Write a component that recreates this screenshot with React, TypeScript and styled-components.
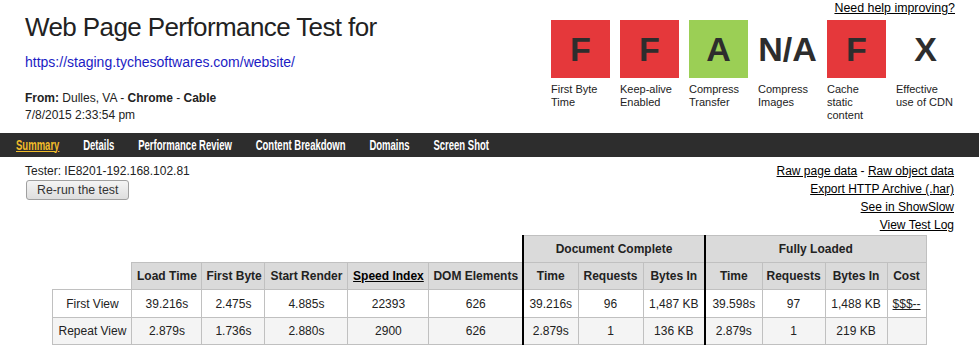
import React from 'react'
import styled, { createGlobalStyle } from 'styled-components'

type Tone = 'bad' | 'good' | 'none'

interface Grade {
    grade: string
    label: string[]
    tone: Tone
}

interface ResultRow {
    label: string
    cells: string[]
    cost?: string
}

const grades: Grade[] = [
    { grade: 'F', label: ['First Byte', 'Time'], tone: 'bad' },
    { grade: 'F', label: ['Keep-alive', 'Enabled'], tone: 'bad' },
    { grade: 'A', label: ['Compress', 'Transfer'], tone: 'good' },
    { grade: 'N/A', label: ['Compress', 'Images'], tone: 'none' },
    { grade: 'F', label: ['Cache', 'static', 'content'], tone: 'bad' },
    { grade: 'X', label: ['Effective', 'use of CDN'], tone: 'none' },
]

const navItems = ['Summary', 'Details', 'Performance Review', 'Content Breakdown', 'Domains', 'Screen Shot']

// column widths, measured border to border
const colWidths = [79, 70, 63, 83, 81, 94, 55, 65, 62, 57, 63, 62, 39]

const rows: ResultRow[] = [
    {
        label: 'First View',
        cells: ['39.216s', '2.475s', '4.885s', '22393', '626', '39.216s', '96', '1,487 KB', '39.598s', '97', '1,488 KB'],
        cost: '$$$--',
    },
    {
        label: 'Repeat View',
        cells: ['2.879s', '1.736s', '2.880s', '2900', '626', '2.879s', '1', '136 KB', '2.879s', '1', '219 KB'],
    },
]

const GlobalStyle = createGlobalStyle`
    body {
        margin: 0;
        background: #fff;
        color: #222;
        font-family: "Liberation Sans", Arial, sans-serif;
    }
`

const App = () => {
    return (
        <>
            <GlobalStyle />
            <Header>
                <TitleBlock>
                    <Title>Web Page Performance Test for</Title>
                    <UrlLink href="#">https://staging.tychesoftwares.com/website/</UrlLink>
                    <Meta>
                        <b>From:</b> Dulles, VA - <b>Chrome</b> - <b>Cable</b>
                    </Meta>
                    <Meta>7/8/2015 2:33:54 pm</Meta>
                </TitleBlock>
                <GradePanel>
                    <HelpLink href="#">Need help improving?</HelpLink>
                    <GradeRow>
                        {grades.map((g, i) => (
                            <GradeItem key={i}>
                                <GradeBox $tone={g.tone}>{g.grade}</GradeBox>
                                <GradeLabel>
                                    {g.label.map((line, j) => (
                                        <div key={j}>{line}</div>
                                    ))}
                                </GradeLabel>
                            </GradeItem>
                        ))}
                    </GradeRow>
                </GradePanel>
            </Header>
            <NavBar>
                <NavList>
                    {navItems.map((item, i) => (
                        <NavLink key={item} href="#" $active={i === 0}>{item}</NavLink>
                    ))}
                </NavList>
            </NavBar>
            <InfoRow>
                <TesterBox>
                    <TesterLine>Tester: IE8201-192.168.102.81</TesterLine>
                    <RerunButton>Re-run the test</RerunButton>
                </TesterBox>
                <RawLinks>
                    <div>
                        <PlainLink href="#">Raw page data</PlainLink> - <PlainLink href="#">Raw object data</PlainLink>
                    </div>
                    <div><PlainLink href="#">Export HTTP Archive (.har)</PlainLink></div>
                    <div><PlainLink href="#">See in ShowSlow</PlainLink></div>
                    <div><PlainLink href="#">View Test Log</PlainLink></div>
                </RawLinks>
            </InfoRow>
            <Results>
                <colgroup>
                    {colWidths.map((w, i) => (
                        <Col key={i} $w={w} />
                    ))}
                </colgroup>
                <thead>
                    <HeadRow>
                        <Blank colSpan={6} />
                        <Head colSpan={3} $split>Document Complete</Head>
                        <Head colSpan={4} $split>Fully Loaded</Head>
                    </HeadRow>
                    <HeadRow>
                        <Blank />
                        <Head>Load Time</Head>
                        <Head>First Byte</Head>
                        <Head>Start Render</Head>
                        <Head><HeadLink href="#">Speed Index</HeadLink></Head>
                        <Head>DOM Elements</Head>
                        <Head $split>Time</Head>
                        <Head>Requests</Head>
                        <Head>Bytes In</Head>
                        <Head $split>Time</Head>
                        <Head>Requests</Head>
                        <Head>Bytes In</Head>
                        <Head>Cost</Head>
                    </HeadRow>
                </thead>
                <tbody>
                    {rows.map((row, r) => (
                        <DataRow key={row.label} $shade={r % 2 === 1} $tall={r === 0}>
                            <Cell>{row.label}</Cell>
                            {row.cells.map((c, i) => (
                                <Cell key={i} $split={i === 5 || i === 8}>{c}</Cell>
                            ))}
                            <Cell>{row.cost && <CostLink href="#">{row.cost}</CostLink>}</Cell>
                        </DataRow>
                    ))}
                </tbody>
            </Results>
        </>
    )
}

export default App

const Header = styled.div`
    display: flex;
    justify-content: space-between;
    align-items: flex-start;
    height: 133px;
    padding: 0 24px 0 25px;
    box-sizing: border-box;
`

const TitleBlock = styled.div`
    display: flex;
    flex-direction: column;
    align-items: flex-start;
`

const Title = styled.h1`
    margin: 11px 0 0;
    font-size: 26px;
    line-height: 32px;
    font-weight: normal;
    letter-spacing: -0.6px;
    color: #222;
`

const UrlLink = styled.a`
    margin-top: 11px;
    font-size: 14px;
    line-height: 16px;
    color: #1c1cc4;
    text-decoration: none;
`

const Meta = styled.div`
    font-size: 12px;
    line-height: 17px;
    color: #222;
    &:nth-of-type(1) {
        margin-top: 20px;
    }
`

const GradePanel = styled.div`
    display: flex;
    flex-direction: column;
    align-items: flex-end;
    width: 404px;
    padding-top: 1px;
`

const HelpLink = styled.a`
    font-size: 12.4px;
    line-height: 14px;
    color: #000;
    text-decoration: underline;
`

const GradeRow = styled.div`
    display: flex;
    gap: 10px;
    margin-top: 5px;
    width: 100%;
`

const GradeItem = styled.div`
    display: flex;
    flex-direction: column;
    width: 59px;
`

const toneColor: Record<Tone, string> = {
    bad: '#e5383b',
    good: '#9bcf55',
    none: 'transparent',
}

const GradeBox = styled.div<{ $tone: Tone }>`
    width: 59px;
    height: 58px;
    line-height: 58px;
    text-align: center;
    font-size: 34px;
    font-weight: bold;
    color: #2d2d2d;
    background: ${(p) => toneColor[p.$tone]};
    white-space: nowrap;
`

const GradeLabel = styled.div`
    margin-top: 5px;
    font-size: 11px;
    line-height: 13px;
    color: #222;
    white-space: nowrap;
`

const NavBar = styled.div`
    display: flex;
    align-items: center;
    height: 24px;
    padding-left: 16px;
    background: #2d2d2d;
    overflow: hidden;
`

// the original nav uses a condensed bold face, squeeze Arial to match
const NavList = styled.div`
    display: flex;
    gap: 35px;
    transform: scaleX(0.68);
    transform-origin: left center;
    white-space: nowrap;
`

const NavLink = styled.a<{ $active?: boolean }>`
    font-size: 14px;
    line-height: 17px;
    font-weight: bold;
    color: ${(p) => (p.$active ? '#f3bd2a' : '#fff')};
    text-decoration: ${(p) => (p.$active ? 'underline' : 'none')};
`

const InfoRow = styled.div`
    display: flex;
    justify-content: space-between;
    align-items: flex-start;
    padding: 5px 25px 0;
`

const TesterBox = styled.div`
    display: flex;
    flex-direction: column;
    align-items: flex-start;
`

const TesterLine = styled.div`
    font-size: 12px;
    line-height: 18px;
    color: #222;
`

const RerunButton = styled.button`
    height: 20px;
    margin-left: 1px;
    padding: 0 10px;
    font-family: "Liberation Sans", Arial, sans-serif;
    font-size: 12.3px;
    color: #333;
    background: linear-gradient(#f4f4f4, #dedede);
    border: 1px solid #a0a0a0;
    border-radius: 3px;
`

const RawLinks = styled.div`
    text-align: right;
    font-size: 12px;
    line-height: 18px;
    color: #000;
`

const PlainLink = styled.a`
    color: #000;
    text-decoration: underline;
`

const Results = styled.table`
    margin: 1px auto 0;
    border-collapse: collapse;
    table-layout: fixed;
    width: 873px;
    font-size: 12px;
    color: #222;
`

const Col = styled.col<{ $w: number }>`
    width: ${(p) => p.$w}px;
`

const HeadRow = styled.tr`
    height: 27px;
`

const DataRow = styled.tr<{ $shade?: boolean; $tall?: boolean }>`
    height: ${(p) => (p.$tall ? 28 : 27)}px;
    background: ${(p) => (p.$shade ? '#f4f4f4' : '#fff')};
`

const Blank = styled.th`
    border: none;
    padding: 0;
`

const Head = styled.th<{ $split?: boolean }>`
    padding: 0 4px;
    background: #dadada;
    border: 1px solid #c0c0c0;
    border-left: ${(p) => (p.$split ? '2px solid #000' : '1px solid #c0c0c0')};
    font-weight: bold;
    text-align: center;
    white-space: nowrap;
`

const HeadLink = styled.a`
    color: #000;
    text-decoration: underline;
`

const Cell = styled.td<{ $split?: boolean }>`
    padding: 0 4px;
    border: 1px solid #c0c0c0;
    border-left: ${(p) => (p.$split ? '2px solid #000' : '1px solid #c0c0c0')};
    text-align: center;
    white-space: nowrap;
`

const CostLink = styled.a`
    color: #222;
    text-decoration: underline;
`
